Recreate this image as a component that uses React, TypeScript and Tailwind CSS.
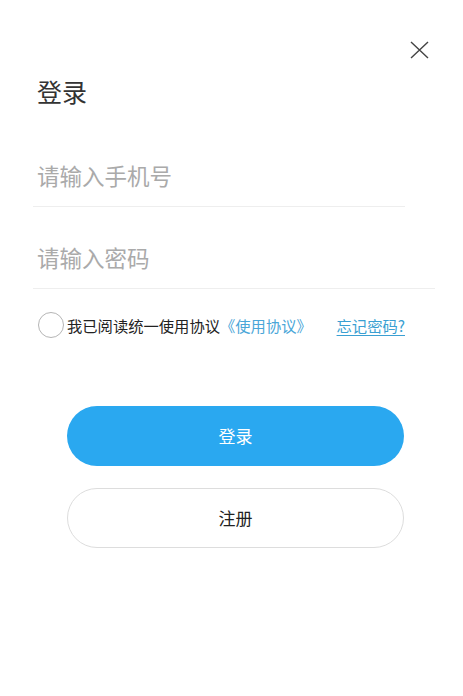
const font = { fontFamily: '"Noto Sans CJK SC", "Noto Sans", sans-serif' };

export default function App() {
  return (
    <div
      className="w-[463px] h-[696px] bg-white flex flex-col text-[#333]"
      style={font}
    >
      <div className="flex justify-end pt-[41px] pr-[34px]">
        <svg width="19" height="18" viewBox="0 0 19 18" className="block">
          <path d="M1 1 L18 17 M18 1 L1 17" stroke="#444" strokeWidth="1.4" fill="none" />
        </svg>
      </div>

      <h1 className="ml-[37px] mt-[17px] text-[25px] leading-[30px] font-normal text-[#333]">
        登录
      </h1>

      <div className="ml-[33px] mt-[42px] w-[372px] pl-[4px] pt-[12px] pb-[16px] border-b border-[#eeeeee]">
        <div className="text-[22.5px] leading-[30px] text-[#aaaaaa]">请输入手机号</div>
      </div>

      <div className="ml-[33px] mt-[23px] w-[402px] pl-[4px] pt-[12px] pb-[16px] border-b border-[#eeeeee]">
        <div className="text-[22.5px] leading-[30px] text-[#aaaaaa]">请输入密码</div>
      </div>

      <div className="ml-[38px] mt-[23px] w-[367px] flex items-center h-[26px]">
        <div className="w-[26px] h-[26px] rounded-full border border-[#b5b5b5] shrink-0" />
        <span className="ml-[3px] text-[15.3px] leading-[20px] text-[#222]">我已阅读统一使用协议</span>
        <span className="text-[15.3px] leading-[20px] text-[#4aa6d8]">《使用协议》</span>
        <span className="ml-auto text-[15.3px] leading-[20px] text-[#3a9fd2] underline underline-offset-[3px]">
          忘记密码?
        </span>
      </div>

      <button className="ml-[67px] mt-[68px] w-[337px] h-[60px] rounded-full bg-[#2aa8f0] text-white text-[17px] flex items-center justify-center">
        登录
      </button>

      <button className="ml-[67px] mt-[22px] w-[337px] h-[60px] rounded-full border-[1.5px] border-[#dddddd] bg-white text-[#222] text-[17px] flex items-center justify-center">
        注册
      </button>
    </div>
  );
}
